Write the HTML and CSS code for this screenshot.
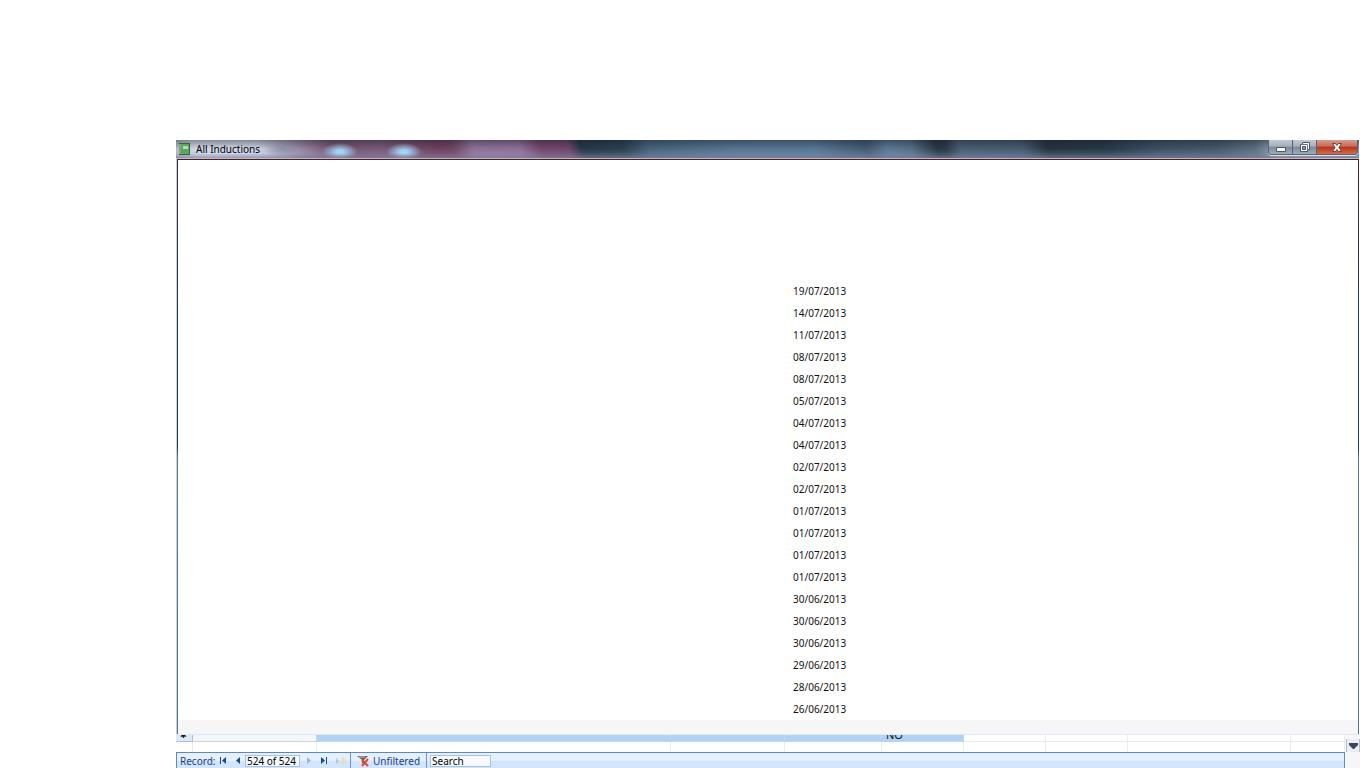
FILE: index.html
```html
<!DOCTYPE html>
<html lang="en">
<head>
<meta charset="utf-8">
<title>All Inductions</title>
<link rel="stylesheet" href="styles.css">
</head>
<body>
<main class="workspace">
  <section class="window">
    <header class="titlebar">
      <svg class="app-icon" width="11" height="12" viewBox="0 0 11 12"><rect width="11" height="12" fill="#2f6b35"/><path d="M2 1h8v10H2z" fill="#5da45f"/><path d="M4 3h5v3H4z" fill="#b5dcae"/><path d="M0 2h2M0 4h2M0 6h2M0 8h2M0 10h2" stroke="#d5e6d5"/></svg>
      <h1 class="title">All Inductions</h1>
      <div class="controls">
        <button class="control" aria-label="Minimize"><svg width="12" height="11" viewBox="0 0 12 11"><path d="M1.500 5.500h9v4h-9z" fill="#fff" stroke="#4d5665"/></svg></button>
        <button class="control" aria-label="Restore"><svg width="12" height="11" viewBox="0 0 12 11"><path d="M3.500 .5h7v7h-2v2h-7v-7h2z" fill="#fff" stroke="#4d5665"/><path d="M3.500 7.500v-3h3v3z" fill="#8b96a5" stroke="#4d5665"/><path d="M4 2.500h4.500V7" fill="none" stroke="#69717e"/></svg></button>
        <button class="control close" aria-label="Close"><svg width="12" height="11" viewBox="0 0 12 11"><path d="M1.500 1.500h3L6 3.500l1.500-2h3L8 5.500l2.500 4h-3L6 7.500l-1.500 2h-3L4 5.500z" fill="#fff" stroke="#6b4148"/></svg></button>
      </div>
    </header>
    <div class="client">
      <ul class="dates">
        <li>19/07/2013</li><li>14/07/2013</li><li>11/07/2013</li><li>08/07/2013</li><li>08/07/2013</li>
        <li>05/07/2013</li><li>04/07/2013</li><li>04/07/2013</li><li>02/07/2013</li><li>02/07/2013</li>
        <li>01/07/2013</li><li>01/07/2013</li><li>01/07/2013</li><li>01/07/2013</li><li>30/06/2013</li>
        <li>30/06/2013</li><li>30/06/2013</li><li>29/06/2013</li><li>28/06/2013</li><li>26/06/2013</li>
      </ul>
      <div class="form-footer"></div>
    </div>
  </section>
  <div class="sheet">
    <div class="sheet-main">
      <div class="row selected">
        <span class="cell marker"><span class="star">✱</span></span><span class="cell first"></span><span class="cell wide"></span><span class="cell mid"></span><span class="cell small"></span><span class="cell col answer"><span class="value">NO</span></span><span class="cell col plain"></span><span class="cell col plain"></span><span class="cell double plain"></span><span class="cell rest plain"></span>
      </div>
      <div class="row blank">
        <span class="cell marker"></span><span class="cell first"></span><span class="cell wide"></span><span class="cell mid"></span><span class="cell small"></span><span class="cell col"></span><span class="cell col"></span><span class="cell col"></span><span class="cell double"></span><span class="cell rest"></span>
      </div>
      <nav class="recordbar">
        <label class="record-label" for="record">Record:</label>
        <button class="nav" aria-label="First record"><svg width="8" height="7" viewBox="0 0 8 7"><path d="M1 0h1v7H1zM7 0v7L3 3.500z" fill="#174a91"/></svg></button>
        <button class="nav" aria-label="Previous record"><svg width="8" height="7" viewBox="0 0 8 7"><path d="M6 0v7L2 3.500z" fill="#174a91"/></svg></button>
        <input class="field record" id="record" value="524 of 524">
        <button class="nav next" aria-label="Next record"><svg width="8" height="7" viewBox="0 0 8 7"><path d="M2 0v7l4-3.500z" fill="#9fb6d3"/></svg></button>
        <button class="nav" aria-label="Last record"><svg width="8" height="7" viewBox="0 0 8 7"><path d="M1 0v7l4-3.500zM6 0h1v7H6z" fill="#174a91"/></svg></button>
        <button class="nav new" aria-label="New record"><svg width="12" height="8" viewBox="0 0 12 8"><path d="M1 1v6l3-3z" fill="#b3c5da"/><path d="M8 0v8M5 4h7M6 1l5 6M11 1L6 7" stroke="#e9dcae"/></svg></button>
        <button class="filter"><svg width="13" height="12" viewBox="0 0 13 12"><path d="M0 1h11L7 5v5L5 8V5z" fill="#70645f"/><path d="M2 2h6" stroke="#c9bdb6"/><path d="M5 5l6 6M11 4l-6 7" stroke="#e24a2d" stroke-width="2"/></svg>Unfiltered</button>
        <input class="field search" aria-label="Search" value="Search">
      </nav>
    </div>
    <div class="scroll">
      <button class="scroll-down" aria-label="Scroll down"><svg width="9" height="6" viewBox="0 0 9 6"><path d="M0 0h9v2L5 6H4L0 2z" fill="#3c4264"/></svg></button>
    </div>
  </div>
</main>
</body>
</html>
```
FILE: styles.css
```css
* { box-sizing: border-box; }
body {
  margin: 0;
  background: #fff;
  color: #111;
  font: 10px/16px "Noto Sans", "Open Sans", sans-serif;
}
button { margin: 0; padding: 0; border: 0; background: none; color: inherit; font: inherit; }
svg { display: block; flex: none; }
.workspace {
  display: flex;
  flex-direction: column;
  height: 100vh;
  padding: 140px 0 0 176px;
  overflow: hidden;
}
.window { display: flex; flex: 1; flex-direction: column; min-height: 0; }
.titlebar {
  display: flex;
  flex: none;
  align-items: center;
  height: 19px;
  margin-right: 1px;
  padding-left: 3px;
  border-bottom: 1px solid #c9b3c1;
  background:
    linear-gradient(#0000 75%, #7c6c8388),
    radial-gradient(ellipse 18px 9px at 164px 12px, #a4d2f5 20%, #a4d2f500),
    radial-gradient(ellipse 18px 9px at 228px 12px, #a4d2f5 20%, #a4d2f500),
    radial-gradient(ellipse 18px 7px at 106px 9px, #6d7c8c88, #6d7c8c00),
    linear-gradient(#10182066, #10182000 50%, #9cb6de55),
    linear-gradient(75deg, #b0b4c8 0, #d4dae8 22px, #ced5e5 80px, #9a8ba6 120px, #75526f 155px, #795a78 200px, #6f405f 255px, #704562 270px, #8f7299 290px, #8e6f98 335px, #75466b 355px, #6f4668 382px, #253846 394px, #2b404f 435px, #48647c 460px, #587591 545px, #587694 620px, #435a71 670px, #5c7894 690px, #587087 712px, #273744 738px, #2b3a48 746px, #4a5e74 760px, #465b70 820px, #26343f 845px, #263946 900px, #3d5064 950px, #46596b 1010px, #5d7080 1045px, #8c9dab 1065px, #8798ab 100%);
}
.title { margin: 0 0 0 6px; font-size: 10px; font-weight: 400; line-height: 16px; color: #000; }
.controls {
  display: flex;
  align-self: flex-start;
  height: 15px;
  margin: 0 1px 0 auto;
  border: solid #59636f;
  border-width: 0 1px 1px;
  border-radius: 0 0 4px 4px;
  box-shadow: 0 1px #dce3e9;
  overflow: hidden;
}
.control {
  display: flex;
  align-items: center;
  justify-content: center;
  width: 24px;
  border-right: 1px solid #59636f;
  background: linear-gradient(#c0c9d2, #a4afbd 45%, #78889b 50%, #9eafc0);
}
.control.close { width: 40px; border: 0; background: linear-gradient(#d79c8e, #c86b58 45%, #b53219 50%, #d76b4c); }
.client {
  display: flex;
  flex: 1;
  flex-direction: column;
  justify-content: space-between;
  min-height: 0;
  margin: 0 1px;
  border: solid #2b2d3b;
  border-width: 1px;
  border-image: linear-gradient(#3d2431, #263950 25%, #263950 50%, #5b7895 52%, #58718b) 1;
  border-bottom: 0;
  box-shadow: -1px 0 #c5d2e0;
}
.dates { margin: 0; padding: 120px 0 0 615px; list-style: none; line-height: 22px; }
.form-footer { height: 14px; background: #f6f6f6; }
.sheet { display: flex; flex: none; border-top: 1px solid #dfe8f5; background: #f6f6f6; }
.sheet-main { flex: 1; min-width: 0; background: #fff; }
.row { display: flex; }
.cell { flex: none; border: solid #e9edf1; border-width: 0 1px 1px 0; overflow: hidden; }
.selected .cell { height: 7px; background: #b0d2f5; border-color: #c3d6e8; }
.selected .plain { background: #fff; border-color: #e9edf1; }
.selected .first { background: #f4f6f8; }
.selected .marker { background: #dce8f6; border-color: #a9c1dd; }
.blank .cell { height: 10px; border-bottom: 0; }
.marker { width: 17px; }
.first { width: 124px; }
.wide { width: 354px; }
.mid { width: 114px; }
.small { width: 97px; }
.col { width: 82px; }
.double { width: 163px; }
.cell.rest { flex: 1; }
.answer, .selected .marker { display: flex; align-items: flex-end; }
.value { padding-left: 4px; font-size: 11px; line-height: 12px; }
.star { padding-left: 4px; font-size: 8px; line-height: 12px; }
.recordbar {
  display: flex;
  align-items: center;
  height: 16px;
  padding-left: 3px;
  border: solid #6289b2;
  border-width: 1px 1px 0;
  background: linear-gradient(#e5f0ff 55%, #d3e4fd 55%);
  color: #173f7d;
}
.record-label { width: 39px; }
.nav { width: 8px; margin-right: 7px; }
.next { margin-left: 5px; }
.nav.new { width: 12px; margin-right: 3px; }
.field {
  height: 12px;
  margin: 0;
  padding: 0 1px;
  border: 1px solid #aac1dc;
  border-radius: 0;
  background: #f7fbff;
  color: #000;
  font: 10px/10px "Noto Sans", "Open Sans", sans-serif;
}
.record { width: 55px; margin-left: -4px; }
.filter {
  display: flex;
  align-items: center;
  gap: 3px;
  height: 15px;
  margin-right: 3px;
  padding: 0 6px;
  border: solid #6f96c6;
  border-width: 0 1px;
}
.search { width: 61px; }
.scroll { width: 15px; padding-top: 4px; background: #f6f6f6; }
.scroll-down {
  display: flex;
  align-items: center;
  justify-content: center;
  width: 14px;
  height: 13px;
  margin-left: 1px;
  border: solid #b7bdc7;
  border-width: 0 1px;
  background: #eaedf1;
}
```
